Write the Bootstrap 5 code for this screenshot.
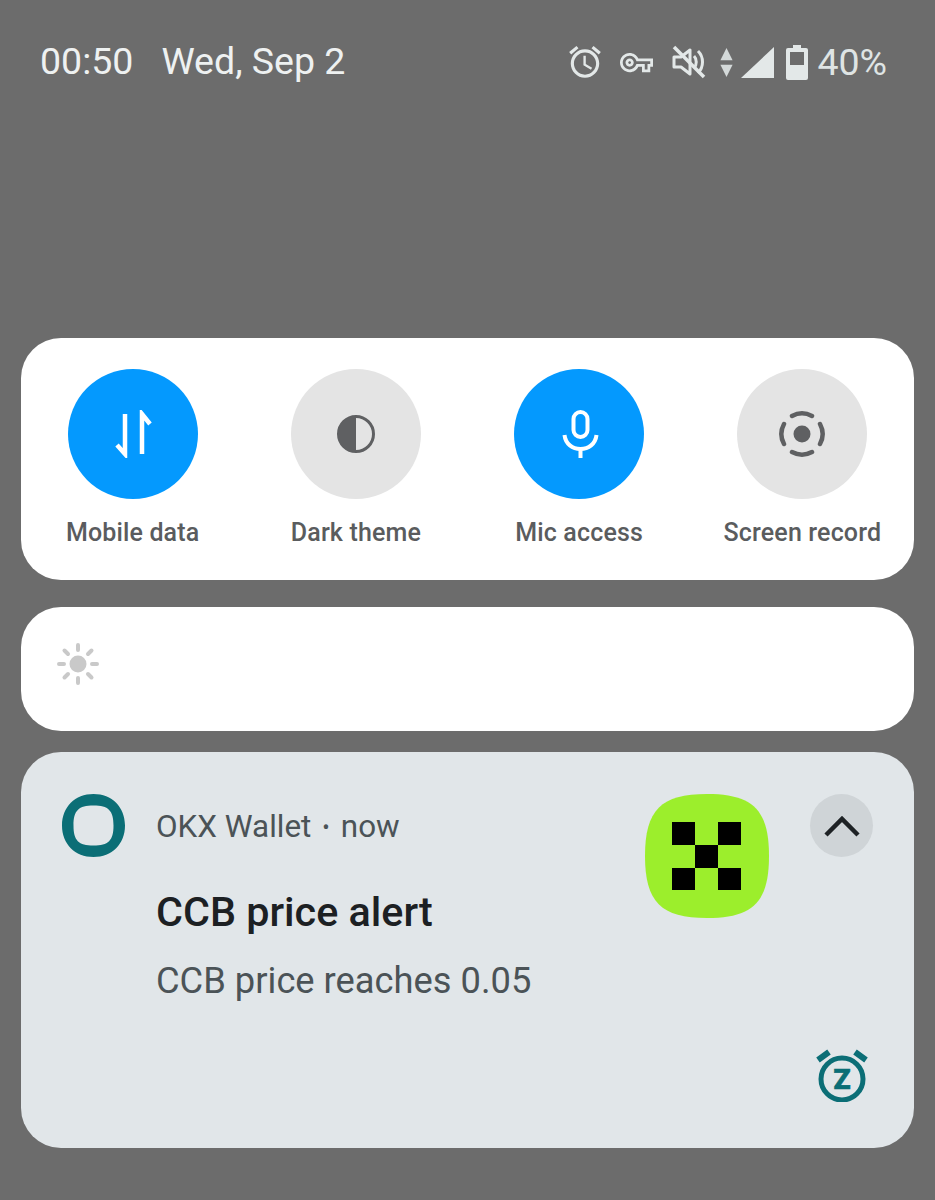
<!DOCTYPE html>
<html lang="en">
<head>
    <meta charset="UTF-8">
    <meta name="viewport" content="width=device-width, initial-scale=1.0">
    <title>Notification shade</title>
    <link href="https://cdn.jsdelivr.net/npm/bootstrap@5.3.0/dist/css/bootstrap.min.css" rel="stylesheet">
    <style>
        body {
            background-color: #6c6c6c;
            font-family: Roboto, "Liberation Sans", sans-serif;
            min-height: 1200px;
        }
        .status-bar {
            height: 122px;
            margin-bottom: 216px;
            padding: 0 48px 0 40px;
            color: #eef1f1;
            font-size: 37.5px;
        }
        .status-clock { margin-right: 28px; }
        .status-icons { color: #e3e8e8; padding-top: 2px; }
        .status-icons svg { flex-shrink: 0; }
        .gap-key { margin-left: 16px; }
        .gap-mute { margin-left: 19px; }
        .gap-arrows { margin-left: 13px; }
        .gap-signal { margin-left: 6px; }
        .gap-battery { margin-left: 12px; }
        .status-pct { color: #dfe4e4; margin-left: 9px; font-size: 37.5px; }
        .shade-panels { padding: 0 21px; }
        .tile-panel {
            background: #fff;
            border-radius: 40px;
            height: 242px;
            padding-top: 31px;
            margin-bottom: 27px;
        }
        .tile-circle {
            width: 130px;
            height: 130px;
            background: #e4e4e4;
        }
        .tile-circle.is-on { background: #0499fe; }
        .tile-label {
            margin-top: 17px;
            font-size: 25px;
            font-weight: 500;
            line-height: 34px;
            color: #5a5c5e;
            letter-spacing: .15px;
            white-space: nowrap;
        }
        .bright-panel {
            background: #fff;
            border-radius: 40px;
            height: 124px;
            padding: 0 0 10px 36px;
            margin-bottom: 21px;
        }
        .notif-card {
            background: #e1e6e9;
            border-radius: 40px;
            height: 396px;
            padding: 42px 41px 46px;
        }
        .notif-body { padding-left: 31px; }
        .notif-head {
            font-size: 31.4px;
            line-height: 65px;
            color: #4b5357;
        }
        .notif-dot { font-size: 22px; margin: 0 11px; vertical-align: 2px; }
        .notif-title {
            font-size: 41.3px;
            font-weight: 500;
            line-height: 48px;
            margin-top: 28px;
            color: #1c2023;
        }
        .notif-text {
            font-size: 36.3px;
            line-height: 44px;
            margin-top: 23px;
            color: #4b5357;
        }
        .chevron-col { width: 63px; margin-left: 41px; }
        .chevron-btn { width: 63px; height: 63px; background: #cfd4d7; }
    </style>
</head>
<body>
    <div class="status-bar d-flex align-items-center">
        <span class="status-clock">00:50</span>
        <span>Wed, Sep 2</span>
        <div class="status-icons d-flex align-items-center ms-auto">
            <svg width="38" height="38" viewBox="0 0 24 24" fill="currentColor"><path d="M22 5.72l-4.6-3.86-1.29 1.53 4.6 3.86L22 5.72zM7.88 3.39L6.6 1.86 2 5.71l1.29 1.53 4.59-3.85zM12.5 8H11v6l4.75 2.85.75-1.23-4-2.37V8zM12 4c-4.97 0-9 4.03-9 9s4.03 9 9 9 9-4.03 9-9-4.03-9-9-9zm0 16c-3.87 0-7-3.13-7-7s3.13-7 7-7 7 3.13 7 7-3.13 7-7 7z"/></svg>
            <svg class="gap-key" width="33" height="33" viewBox="0 0 24 24" fill="currentColor"><path d="M22 19h-6v-4h-2.68c-1.14 2.42-3.6 4-6.32 4-3.86 0-7-3.14-7-7s3.14-7 7-7c2.72 0 5.17 1.58 6.32 4H24v6h-2v4zm-4-2h2v-4h2v-2H11.94l-.23-.67C11.01 8.34 9.11 7 7 7c-2.76 0-5 2.24-5 5s2.24 5 5 5c2.11 0 4.01-1.34 4.71-3.33l.23-.67H18v4zM7 15c-1.65 0-3-1.35-3-3s1.35-3 3-3 3 1.35 3 3-1.35 3-3 3zm0-4c-.55 0-1 .45-1 1s.45 1 1 1 1-.45 1-1-.45-1-1-1z"/></svg>
            <svg class="gap-mute" width="34" height="34" viewBox="0 0 34 34" fill="none" stroke="currentColor" stroke-width="3"><path d="M2 12h7l9 -7v24l-9 -7H2z" stroke-linejoin="round"/><path d="M22 11c3 3 3 9 0 12M26 6c6 6 6 16 0 22"/><path d="M2 2l30 30" stroke-width="3.5"/></svg>
            <svg class="gap-arrows" width="15" height="31" viewBox="0 0 16 31" fill="#d4d9d9"><path d="M8 0l6.5 13H1.500zM8 31L1.500 18h13z"/></svg>
            <svg class="gap-signal" width="34" height="32" viewBox="0 0 34 32" fill="currentColor"><path d="M1 32L34 1v31z"/></svg>
            <svg class="gap-battery" width="22" height="35" viewBox="0 0 22 35"><path d="M7 0h8v3h5a2 2 0 0 1 2 2v28a2 2 0 0 1-2 2H2a2 2 0 0 1-2-2V5a2 2 0 0 1 2-2h5z" fill="currentColor"/><rect x="4" y="7" width="14" height="13" fill="#6c6c6c"/></svg>
            <span class="status-pct">40%</span>
        </div>
    </div>

    <div class="shade-panels">
        <div class="tile-panel">
            <div class="row row-cols-4 g-0 text-center">
                <div class="col d-flex flex-column align-items-center">
                    <div class="tile-circle is-on rounded-circle d-flex align-items-center justify-content-center">
                        <svg width="44" height="48" viewBox="0 0 44 48" fill="none" stroke="#fff" stroke-width="4.500"><path d="M14 4v40l-8-9"/><path d="M31 44V4l8 10"/></svg>
                    </div>
                    <div class="tile-label">Mobile data</div>
                </div>
                <div class="col d-flex flex-column align-items-center">
                    <div class="tile-circle rounded-circle d-flex align-items-center justify-content-center">
                        <svg width="40" height="40" viewBox="0 0 40 40"><circle cx="20" cy="20" r="17.500" fill="none" stroke="#5f6062" stroke-width="3"/><path d="M20 2a18 18 0 0 0 0 36z" fill="#5f6062"/></svg>
                    </div>
                    <div class="tile-label">Dark theme</div>
                </div>
                <div class="col d-flex flex-column align-items-center">
                    <div class="tile-circle is-on rounded-circle d-flex align-items-center justify-content-center">
                        <svg width="40" height="48" viewBox="-1.500 0 40 48" fill="none" stroke="#fff" stroke-width="4"><rect x="13" y="2" width="14" height="25" rx="7"/><path d="M4 25c1 9 8 14 16 14s15-5 16-14"/><path d="M20 38v10"/></svg>
                    </div>
                    <div class="tile-label">Mic access</div>
                </div>
                <div class="col d-flex flex-column align-items-center">
                    <div class="tile-circle rounded-circle d-flex align-items-center justify-content-center">
                        <svg width="50" height="50" viewBox="0 0 50 50" fill="none" stroke="#5f6062" stroke-width="4.500" stroke-linecap="round"><circle cx="25" cy="25" r="8.500" fill="#5f6062" stroke="none"/><path d="M15 7a21 21 0 0 1 20 0M43 15a21 21 0 0 1 0 20M35 43a21 21 0 0 1-20 0M7 35a21 21 0 0 1 0-20"/></svg>
                    </div>
                    <div class="tile-label">Screen record</div>
                </div>
            </div>
        </div>

        <div class="bright-panel d-flex align-items-center">
            <svg width="42" height="42" viewBox="0 0 42 42" stroke="#c9c9c9" stroke-width="4" stroke-linecap="round" fill="#c9c9c9"><circle cx="21" cy="21" r="8.500" stroke="none"/><path d="M21 2v5M21 35v5M2 21h5M35 21h5M7.500 7.500l3.500 3.500M31 31l3.500 3.500M7.500 34.500l3.500-3.500M31 11l3.500-3.500"/></svg>
        </div>

        <div class="notif-card d-flex">
            <svg class="flex-shrink-0" width="63" height="63" viewBox="0 0 63 63" fill="#0b6e76" fill-rule="evenodd"><path d="M31.500 0C50 0 63 13 63 31.500S50 63 31.500 63 0 50 0 31.500 13 0 31.500 0zM31.500 11.500C46.500 11.500 51.500 16.500 51.500 31.500S46.500 51.500 31.500 51.500 11.500 46.500 11.500 31.500 16.500 11.500 31.500 11.500z"/></svg>
            <div class="notif-body flex-grow-1">
                <div class="notif-head">OKX Wallet<span class="notif-dot">&bull;</span>now</div>
                <div class="notif-title">CCB price alert</div>
                <div class="notif-text">CCB price reaches 0.05</div>
            </div>
            <svg class="flex-shrink-0" width="124" height="124" viewBox="0 0 124 124"><path d="M62 0C108 0 124 16 124 62S108 124 62 124 0 108 0 62 16 0 62 0z" fill="#9cee2c"/><path d="M27 28h23v23H27zM73 28h23v23H73zM50 51h23v23H50zM27 74h23v22H27zM73 74h23v22H73z" fill="#000"/></svg>
            <div class="chevron-col d-flex flex-column align-items-center flex-shrink-0">
                <div class="chevron-btn rounded-circle d-flex align-items-center justify-content-center">
                    <svg width="36" height="22" viewBox="0 0 36 22" fill="none" stroke="#1e2225" stroke-width="4.500"><path d="M2 20L18 4l16 16"/></svg>
                </div>
                <svg class="mt-auto" width="54" height="54" viewBox="0 0 54 54" fill="none" stroke="#0b6e76" stroke-width="5"><circle cx="27" cy="31" r="21"/><path d="M3 12l11-8M51 12L40 4" stroke-width="6"/><text x="27" y="41" text-anchor="middle" font-family="Roboto, sans-serif" font-size="28" font-weight="900" fill="#0b6e76" stroke="#0b6e76" stroke-width=".6">Z</text></svg>
            </div>
        </div>
    </div>

    <script src="https://cdn.jsdelivr.net/npm/bootstrap@5.3.0/dist/js/bootstrap.bundle.min.js"></script>
</body>
</html>
